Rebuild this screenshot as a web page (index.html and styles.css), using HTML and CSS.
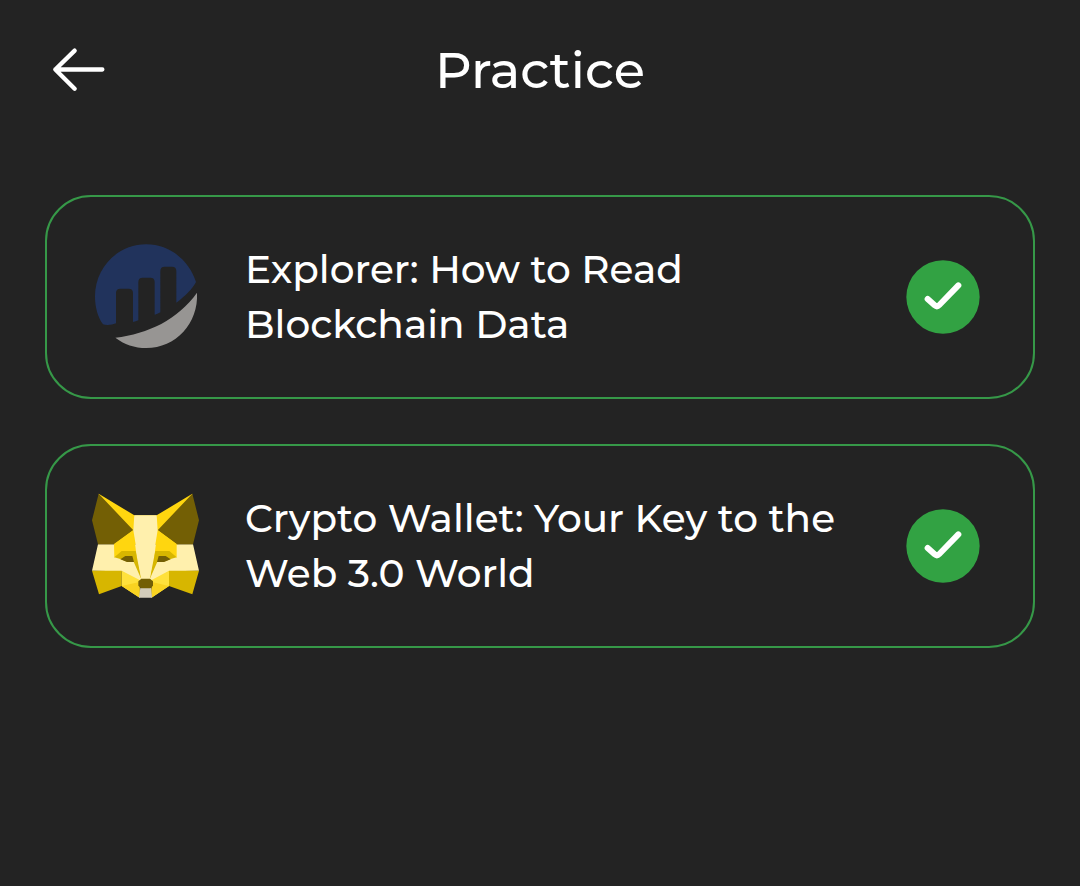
FILE: index.html
```html
<!DOCTYPE html>
<html lang="en">
<head>
<meta charset="utf-8">
<meta name="viewport" content="width=device-width, initial-scale=1">
<title>Practice</title>
<link rel="stylesheet" href="styles.css">
</head>
<body>
<header class="topbar">
  <button class="back" type="button" aria-label="Back">
    <svg viewBox="0 0 240 210" aria-hidden="true"><path d="M104 47 46 103.500 104 161M46 103.500H187" fill="none" stroke="#fff" stroke-width="13" stroke-linecap="round" stroke-linejoin="round"/></svg>
  </button>
  <h1 class="title">Practice</h1>
</header>
<main class="list">
  <a class="card" href="#explorer">
    <svg class="logo" viewBox="21 24 324 324" aria-hidden="true">
      <path fill="#21335c" d="M54 268C38 246 30 216 30 184 30 98 98 28 184 28c68 0 128 46 149 113-10 20-32 42-59 62V108q0-13-13-13H239q-13 0-13 13V232q-9 5-17 7V141q0-13-13-13H173q-13 0-13 13V256q-8 3-16 5V174q0-13-13-13H106q-13 0-13 13V265q-12 5-25 5-9 0-14-2Z"/>
      <path fill="#979593" d="M91 308C190 296 278 254 336 173 341 265 272 339 184 339c-35 0-67-11-93-31Z"/>
    </svg>
    <span class="name">Explorer: How to Read Blockchain Data</span>
    <svg class="done" viewBox="33 30 222 222" role="img" aria-label="Completed"><circle cx="144" cy="141" r="110" fill="#32a243"/><path d="M98 147 119 166Q126 172 133 165L190 106" fill="none" stroke="#fff" stroke-width="18" stroke-linecap="round" stroke-linejoin="round"/></svg>
  </a>
  <a class="card" href="#wallet">
    <svg class="logo" viewBox="21 21 324 324" aria-hidden="true">
      <path fill="#fff0ad" d="M39 178H324L342 257 252 259 204 290H160L110 259 21 257Z"/>
      <path fill="#ffd60f" d="M41 26 148 91H215L322 26 280 178H87Z"/>
      <path fill="#735f05" d="M41 26 145 136 88 178H39L21 106ZM322 26 218 136 275 178H324L342 106Z"/>
      <path fill="#d7b600" d="M21 257H110V303L42 328ZM342 257H252V303L322 328Z"/>
      <path fill="#ffe13c" d="M110 257 164 285V338L110 303ZM252 257 200 285V338L252 303Z"/>
      <path fill="#f9d321" d="M110 303 160 292 164 313V338ZM252 303 204 292 199 313V338Z"/>
      <path fill="#ffd60f" d="M87 177 145 135 155 215 110 205 88 218ZM275 177 218 135 208 215 253 205 275 218Z"/>
      <path fill="#d7b600" d="M88 217 110 198H152L169 283 146 230H126L106 222ZM275 217 253 198H211L194 283 217 230H237L257 222Z"/>
      <path fill="#735f05" d="M106 223 121 213H142L147 231H126ZM257 223 242 213H221L216 231H237Z"/>
      <path fill="#fff0ad" d="M148 91H215L218 136 194 283H169L145 136Z"/>
      <path fill="#d3cdbb" d="M166 308H198L201 338H162Z"/>
      <path fill="#735f05" d="M169 281H195L204 289V302L196 310H168L160 302V289Z"/>
    </svg>
    <span class="name">Crypto Wallet: Your Key to the Web 3.0 World</span>
    <svg class="done" viewBox="33 30 222 222" role="img" aria-label="Completed"><circle cx="144" cy="141" r="110" fill="#32a243"/><path d="M98 147 119 166Q126 172 133 165L190 106" fill="none" stroke="#fff" stroke-width="18" stroke-linecap="round" stroke-linejoin="round"/></svg>
  </a>
</main>
</body>
</html>
```
FILE: styles.css
```css
* {
  box-sizing: border-box;
}

body {
  margin: 0;
  min-height: 100vh;
  background: #232323;
  color: #fff;
  font-family: Montserrat, Inter, sans-serif;
  font-weight: 500;
}

.topbar {
  display: grid;
  grid-template-columns: 80px 1fr 80px;
  align-items: center;
  padding: 35px 40px;
}

.back {
  width: 80px;
  height: 70px;
  padding: 0;
  border: 0;
  background: none;
  cursor: pointer;
}

.back svg {
  display: block;
  width: 100%;
}

.title {
  margin: 0;
  font-size: 51px;
  font-weight: 500;
  line-height: 70px;
  text-align: center;
}

.list {
  display: flex;
  flex-direction: column;
  gap: 45px;
  padding: 55px 45px;
}

.card {
  display: flex;
  align-items: center;
  gap: 45px;
  padding: 45px 53px 45px 45px;
  border: 2px solid #369848;
  border-radius: 46px;
  color: inherit;
  text-decoration: none;
}

.logo {
  flex: none;
  width: 108px;
  height: 108px;
}

.name {
  flex: 1;
  font-size: 39px;
  line-height: 55px;
}

.done {
  flex: none;
  width: 74px;
  height: 74px;
}
```
